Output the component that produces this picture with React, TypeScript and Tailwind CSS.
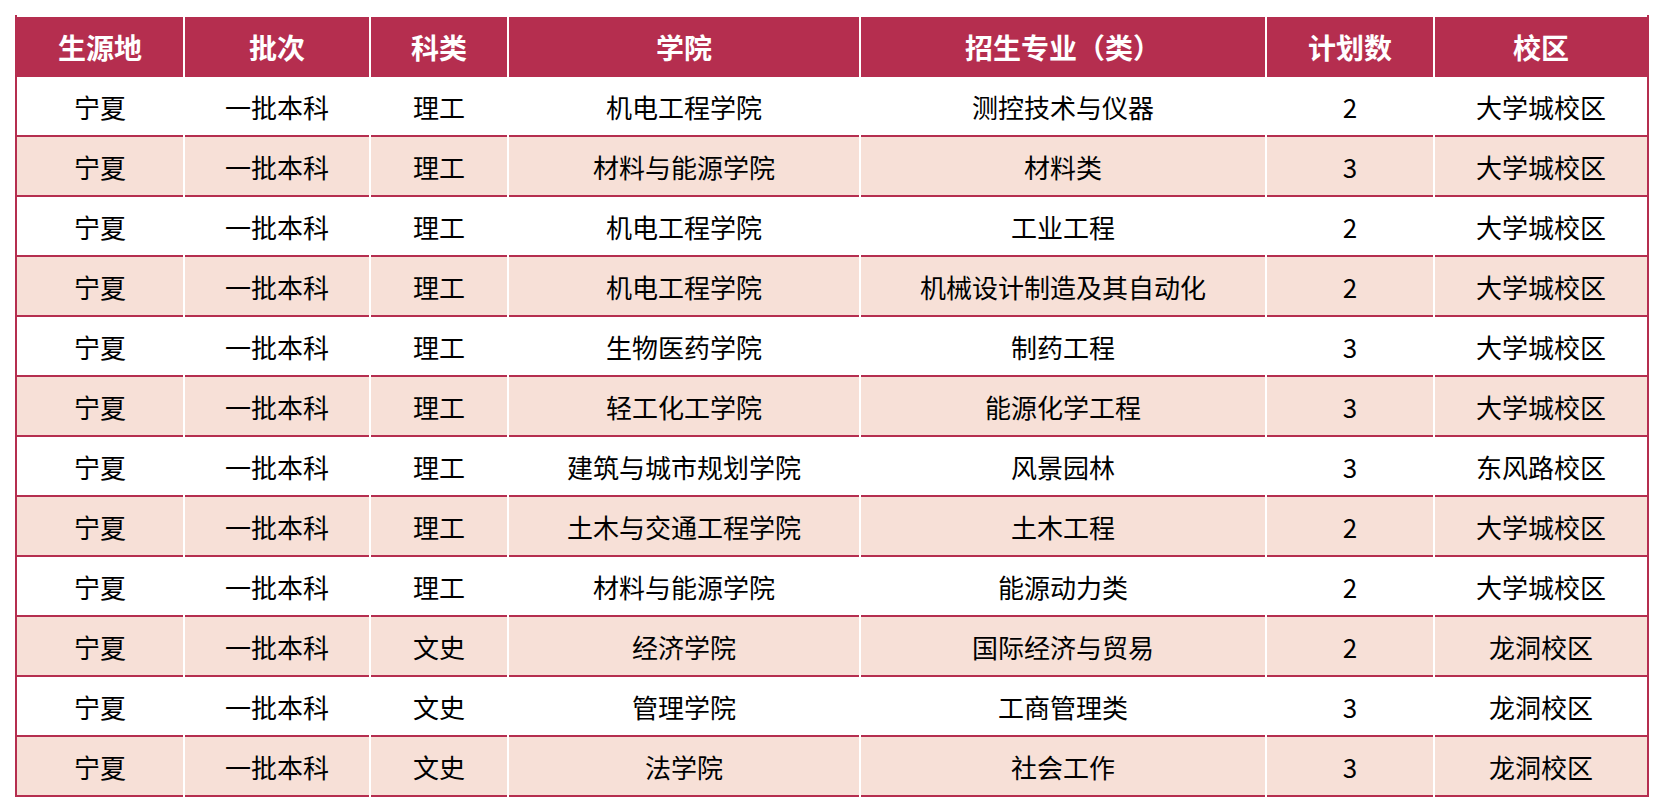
import React from "react";

const headers = ["生源地", "批次", "科类", "学院", "招生专业（类）", "计划数", "校区"];

const rows: string[][] = [
  ["宁夏", "一批本科", "理工", "机电工程学院", "测控技术与仪器", "2", "大学城校区"],
  ["宁夏", "一批本科", "理工", "材料与能源学院", "材料类", "3", "大学城校区"],
  ["宁夏", "一批本科", "理工", "机电工程学院", "工业工程", "2", "大学城校区"],
  ["宁夏", "一批本科", "理工", "机电工程学院", "机械设计制造及其自动化", "2", "大学城校区"],
  ["宁夏", "一批本科", "理工", "生物医药学院", "制药工程", "3", "大学城校区"],
  ["宁夏", "一批本科", "理工", "轻工化工学院", "能源化学工程", "3", "大学城校区"],
  ["宁夏", "一批本科", "理工", "建筑与城市规划学院", "风景园林", "3", "东风路校区"],
  ["宁夏", "一批本科", "理工", "土木与交通工程学院", "土木工程", "2", "大学城校区"],
  ["宁夏", "一批本科", "理工", "材料与能源学院", "能源动力类", "2", "大学城校区"],
  ["宁夏", "一批本科", "文史", "经济学院", "国际经济与贸易", "2", "龙洞校区"],
  ["宁夏", "一批本科", "文史", "管理学院", "工商管理类", "3", "龙洞校区"],
  ["宁夏", "一批本科", "文史", "法学院", "社会工作", "3", "龙洞校区"],
];

export default function App() {
  return (
    <div
      className="min-h-[812px] w-full bg-white pl-[15px] pt-[15px]"
      style={{ fontFamily: '"Noto Sans CJK SC", "Noto Sans", sans-serif' }}
    >
      <div className="w-fit border-x-2 border-[#b52e4f] bg-white pt-[2px]">
        <div className="grid grid-cols-[166px_184px_136px_350px_404px_166px_212px] gap-x-[2px]">
          {headers.map((h) => (
            <div
              key={h}
              className="flex h-[60px] items-center justify-center bg-[#b52e4f] text-[28px] font-bold text-white"
            >
              {h}
            </div>
          ))}
          {rows.map((row, i) =>
            row.map((cell, j) => (
              <div
                key={`${i}-${j}`}
                className={
                  "flex h-[60px] items-center justify-center border-b-2 border-[#b52e4f] text-[26px] text-black " +
                  (i % 2 === 1 ? "bg-[#f7e0d7]" : "bg-white")
                }
              >
                {cell}
              </div>
            ))
          )}
        </div>
      </div>
    </div>
  );
}
